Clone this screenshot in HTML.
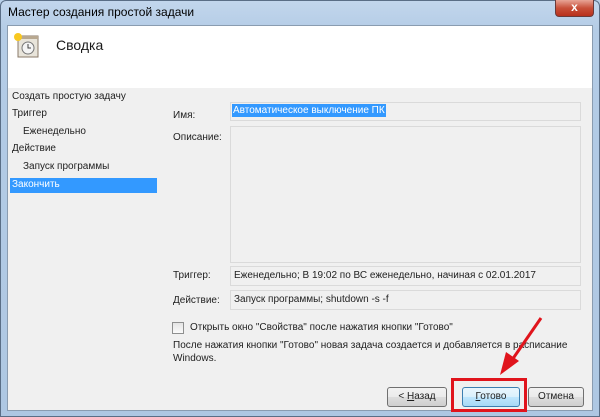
<!DOCTYPE html>
<html><head><meta charset="utf-8"><style>
*{margin:0;padding:0;box-sizing:border-box}
body{width:600px;height:417px;overflow:hidden;background:#b9d1ea;font-family:"Liberation Sans","DejaVu Sans",sans-serif;font-size:10px;color:#1e1e1e;position:relative}
.frame{position:absolute;left:0;top:0;width:600px;height:417px;background:linear-gradient(#c2d6ec,#b4cce6 30px,#aec7e2);border:1px solid #5a6e86;border-radius:6px 6px 0 0}
.title{position:absolute;left:8px;top:5px;font-size:12px;color:#000}
.close{position:absolute;left:555px;top:0;width:39px;height:17px;background:linear-gradient(#e8a496,#c8503a 50%,#b8301c);border:1px solid #6a3a3a;border-top:none;border-radius:0 0 4px 4px;color:#fff;font-weight:bold;text-align:center;font-size:12px;line-height:15px}
.client{position:absolute;left:7px;top:25px;width:586px;height:386px;background:#f0f0f0;border:1px solid #8a9cb0}
.head{position:absolute;left:0;top:0;width:584px;height:62px;background:#fff}
.abs{position:absolute;white-space:nowrap}
.box{position:absolute;border:1px solid #dadada;background:#f0f0f0}
.btn{position:absolute;height:20px;border:1px solid #707070;border-radius:3px;background:linear-gradient(#f2f2f2,#ebebeb 50%,#dddddd 51%,#cfcfcf);text-align:center;line-height:18px;font-size:10px}
</style></head><body>
<div class="frame"></div>
<div class="title">Мастер создания простой задачи</div>
<div class="close">x</div>
<div class="client">
 <div class="head">
  <svg class="abs" style="left:3px;top:5px" width="30" height="28" viewBox="0 0 30 28">
   <rect x="7" y="5" width="20" height="21" fill="#e8e4da" stroke="#8a7a68"/>
   <rect x="7" y="5" width="20" height="3" fill="#b8a890"/>
   <circle cx="17" cy="17" r="6" fill="#f4f4f4" stroke="#777"/>
   <path d="M17 13v4h3" stroke="#444" fill="none"/>
   <circle cx="7" cy="6" r="4" fill="#f8c820"/>
  </svg>
  <div class="abs" style="left:48px;top:11px;font-size:14px;color:#1a1a1a">Сводка</div>
 </div>
 <div class="abs" style="left:4px;top:65px">Создать простую задачу</div>
 <div class="abs" style="left:4px;top:82px">Триггер</div>
 <div class="abs" style="left:15px;top:100px">Еженедельно</div>
 <div class="abs" style="left:4px;top:117px">Действие</div>
 <div class="abs" style="left:15px;top:135px">Запуск программы</div>
 <div class="abs" style="left:2px;top:152px;width:147px;height:15px;background:#3399ff;color:#fff;padding:1px 0 0 2px">Закончить</div>
 <div class="abs" style="left:165px;top:84px">Имя:</div>
 <div class="box" style="left:222px;top:76px;width:351px;height:19px"><span class="abs" style="left:1px;top:1px;background:#3399ff;color:#fff;padding:1px 1px">Автоматическое выключение ПК</span></div>
 <div class="abs" style="left:165px;top:106px">Описание:</div>
 <div class="box" style="left:222px;top:100px;width:351px;height:137px"></div>
 <div class="abs" style="left:165px;top:244px">Триггер:</div>
 <div class="box" style="left:222px;top:240px;width:351px;height:20px"><span class="abs" style="left:3px;top:3px">Еженедельно; В 19:02 по ВС еженедельно, начиная с 02.01.2017</span></div>
 <div class="abs" style="left:165px;top:269px">Действие:</div>
 <div class="box" style="left:222px;top:264px;width:351px;height:20px"><span class="abs" style="left:3px;top:3px">Запуск программы; shutdown -s -f</span></div>
 <div class="abs" style="left:164px;top:296px;width:12px;height:12px;border:1px solid #8e8f8f;background:linear-gradient(#e4e4e4,#fafafa)"></div>
 <div class="abs" style="left:182px;top:296px">Открыть окно "Свойства" после нажатия кнопки "Готово"</div>
 <div class="abs" style="left:165px;top:313px;line-height:13px">После нажатия кнопки "Готово" новая задача создается и добавляется в расписание<br>Windows.</div>
 <div class="btn" style="left:379px;top:361px;width:60px">&lt; <u>Н</u>азад</div>
 <div class="btn" style="left:454px;top:361px;width:58px;border-color:#3c7fb1;background:linear-gradient(#eaf6fd,#d9f0fc 50%,#bee6fd 51%,#a7d9f5)"><u>Г</u>отово</div>
 <div class="btn" style="left:520px;top:361px;width:56px">Отмена</div>
</div>
<div class="abs" style="left:451px;top:378px;width:76px;height:34px;border:3px solid #e0141c"></div>
<svg class="abs" style="left:0;top:0" width="600" height="417">
 <line x1="541" y1="318" x2="512" y2="360" stroke="#e0141c" stroke-width="3"/>
 <polygon points="500,375 506,352 519,361" fill="#e0141c"/>
</svg>
</body></html>
